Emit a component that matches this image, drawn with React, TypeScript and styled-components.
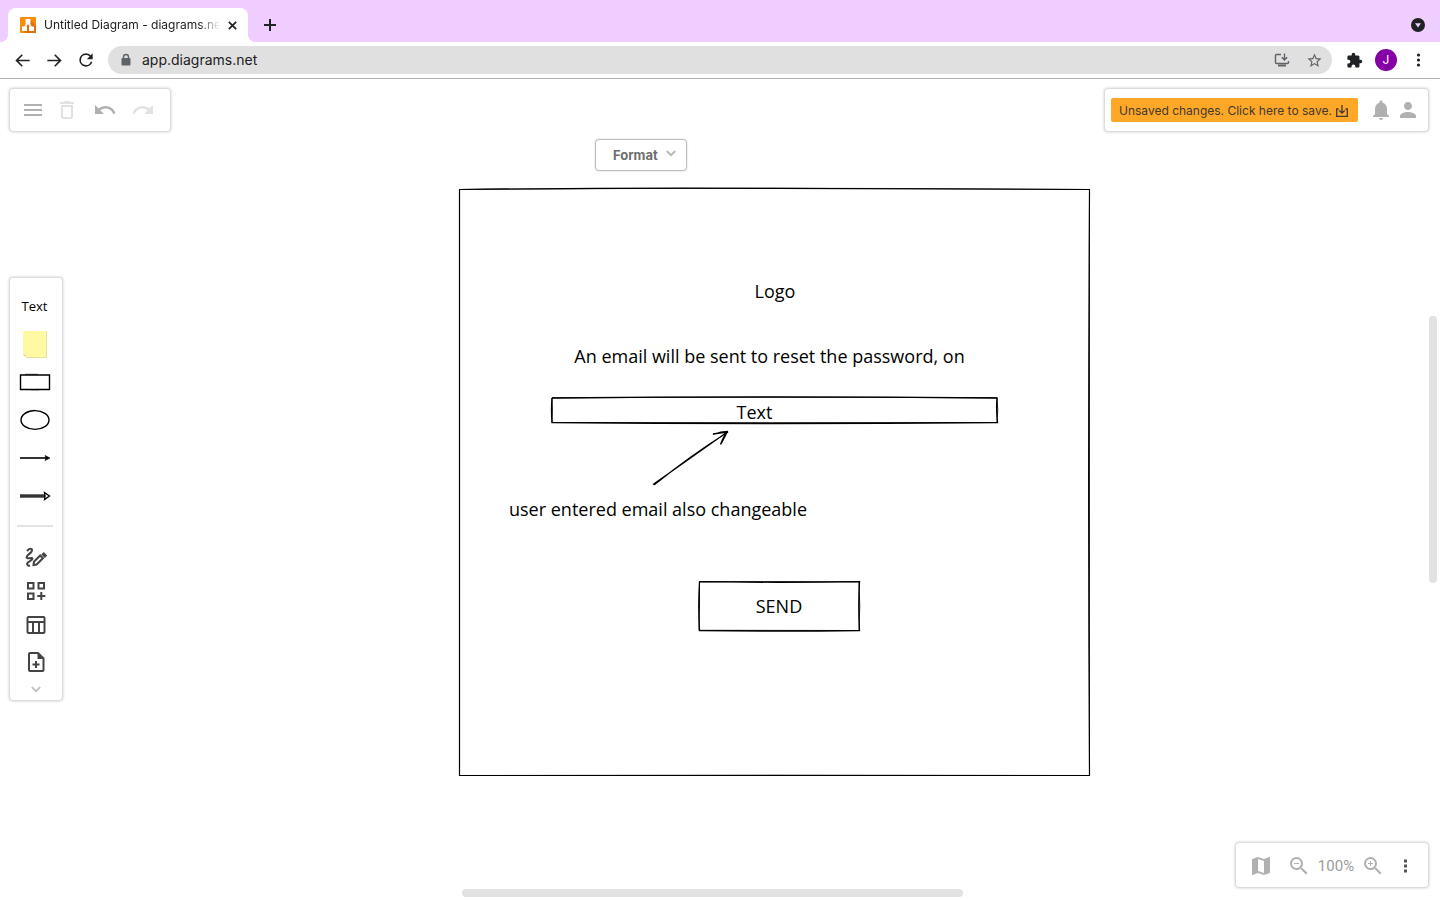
import React from "react";
import styled, { createGlobalStyle } from "styled-components";

const GlobalStyle = createGlobalStyle`
  *, *::before, *::after { box-sizing: border-box; }
  body { margin: 0; background: #fff; font-family: Inter, "Liberation Sans", sans-serif; color: #202124; }
  svg { display: block; flex: none; }
  button { font: inherit; color: inherit; }
`;

const Page = styled.div`
  display: flex;
  flex-direction: column;
  min-height: 100vh;
`;

/* Browser chrome */

const TabStrip = styled.header`
  display: flex;
  align-items: flex-end;
  height: 42px;
  padding: 0 15px 0 8px;
  background: #efceff;
`;

const Tab = styled.div`
  position: relative;
  display: flex;
  align-items: center;
  width: 240px;
  height: 34px;
  padding: 0 8px 0 12px;
  background: #fff;
  border-radius: 8px 8px 0 0;

  &::before,
  &::after {
    content: "";
    position: absolute;
    bottom: 0;
    width: 8px;
    height: 8px;
  }
  &::before {
    left: -8px;
    background: radial-gradient(circle at 0 0, #efceff 8px, #fff 8px);
  }
  &::after {
    right: -8px;
    background: radial-gradient(circle at 100% 0, #efceff 8px, #fff 8px);
  }
`;

const TabTitle = styled.span`
  flex: 1;
  min-width: 0;
  margin: 0 4px 0 8px;
  overflow: hidden;
  white-space: nowrap;
  font-size: 12px;
  line-height: 16px;
  mask-image: linear-gradient(to right, #000 88%, transparent);
`;

const IconButton = styled.button<{ $w?: number; $h?: number; $color?: string }>`
  display: flex;
  align-items: center;
  justify-content: center;
  flex: none;
  width: ${(p) => p.$w ?? 24}px;
  height: ${(p) => p.$h ?? 24}px;
  padding: 0;
  border: 0;
  background: none;
  color: ${(p) => p.$color ?? "#202124"};
`;

const NewTab = styled.div`
  display: flex;
  align-items: center;
  flex: 1;
  justify-content: space-between;
  height: 34px;
  padding-left: 10px;
`;

const NavBar = styled.nav`
  display: flex;
  align-items: center;
  height: 37px;
  padding: 0 14px 0 6px;
  border-bottom: 1px solid #b0b0b0;
`;

const NavButtons = styled.div`
  display: flex;
  width: 102px;
`;

const AddressBar = styled.div`
  display: flex;
  align-items: center;
  flex: 1;
  min-width: 0;
  height: 28px;
  padding: 0 10px 0 11px;
  gap: 11px;
  border-radius: 14px;
  background: #e0e0e0;
`;

const AddressInput = styled.input`
  flex: 1;
  min-width: 0;
  padding: 0;
  border: 0;
  outline: 0;
  background: none;
  color: #202124;
  font: 14px/20px Inter, "Liberation Sans", sans-serif;
`;

const AddressActions = styled.div`
  display: flex;
  gap: 16px;
`;

const NavEnd = styled.div`
  display: flex;
  align-items: center;
  padding-left: 14px;
  gap: 13px;
`;

const Avatar = styled.button`
  width: 22px;
  height: 22px;
  padding: 0;
  border: 0;
  border-radius: 50%;
  background: #8600a8;
  color: #fff;
  font-size: 12px;
  line-height: 22px;
`;

/* Editor */

const Workspace = styled.main`
  position: relative;
  flex: 1;
  min-height: 720px;
  overflow: hidden;
`;

const Panel = styled.div`
  position: absolute;
  display: flex;
  align-items: center;
  background: #fff;
  border: 1px solid #dcdcdc;
  border-radius: 4px;
  box-shadow: 0 0 3px rgba(0, 0, 0, 0.2);
`;

const MainToolbar = styled(Panel)`
  top: 9px;
  left: 9px;
  height: 44px;
  padding: 0 15px 0 11px;
  gap: 14px;
`;

const MenuGroup = styled.div`
  display: flex;
  gap: 10px;
`;

const StatusToolbar = styled(Panel)`
  top: 9px;
  right: 11px;
  height: 44px;
  padding: 0 8px 0 6px;
  gap: 3px;
`;

const SaveButton = styled.button`
  display: flex;
  align-items: center;
  justify-content: space-between;
  width: 247px;
  height: 24px;
  margin-right: 8px;
  padding: 1px 10px 0 8px;
  border: 0;
  border-radius: 2px;
  background: #ffa726;
  color: #403a30;
  font-size: 12px;
  line-height: 16px;
  white-space: nowrap;
`;

const FormatButton = styled.button`
  position: absolute;
  top: 60px;
  left: 595px;
  display: flex;
  align-items: center;
  width: 92px;
  height: 32px;
  padding: 0 10px 0 17px;
  justify-content: space-between;
  background: #fff;
  border: 1px solid #bdbdbd;
  border-radius: 4px;
  box-shadow: 0 0 2px rgba(0, 0, 0, 0.2);
  color: #6e6e6e;
  font-size: 13px;
  font-weight: 700;
  line-height: 16px;
`;

const FormatChevron = styled.span`
  padding-bottom: 4px;
  color: #b8b8b8;
`;

const ShapePanel = styled(Panel)`
  top: 198px;
  left: 9px;
  flex-direction: column;
  width: 54px;
  padding: 9px 0 4px;
`;

const ShapeGroup = styled.div`
  width: 52px;
  padding-right: 3px;
`;

const ShapeText = styled.span`
  font-family: "Open Sans", sans-serif;
  font-size: 13px;
  line-height: 16px;
  color: #000;
`;

const Divider = styled.hr`
  width: 36px;
  height: 2px;
  margin: 10px 2px 13px 0;
  border: 0;
  background: #e4e4e4;
`;

const ZoomToolbar = styled(Panel)`
  right: 11px;
  bottom: 12px;
  height: 46px;
  padding: 2px 11px 0 13px;
  gap: 8px;
`;

const MapSlot = styled.div`
  padding-right: 6px;
`;

const ZoomLevel = styled.button`
  display: flex;
  justify-content: center;
  width: 34px;
  padding: 0;
  border: 0;
  background: none;
  color: #9b9b9b;
  font-family: Roboto, sans-serif;
  font-size: 15px;
  line-height: 20px;
  white-space: nowrap;
`;

const Scrollbar = styled.div<{ $vertical?: boolean }>`
  position: absolute;
  border-radius: 4px;
  background: #e2e2e2;
  ${(p) =>
    p.$vertical
      ? "top: 237px; right: 3px; width: 8px; height: 267px;"
      : "left: 462px; bottom: 3px; width: 501px; height: 8px;"}
`;

/* Diagram nodes, each placed on the free canvas */

const Node = styled.div<{ $x: number; $y: number; $w: number; $h: number }>`
  position: absolute;
  left: ${(p) => p.$x}px;
  top: ${(p) => p.$y}px;
  width: ${(p) => p.$w}px;
  height: ${(p) => p.$h}px;
  display: flex;
  align-items: center;
  justify-content: center;
  color: #000;
  font-family: "Open Sans", sans-serif;
  font-size: 18px;
  line-height: 24px;
  white-space: nowrap;
`;

const Outline = styled.svg`
  position: absolute;
  inset: 0;
  overflow: visible;
`;

const Glyph = ({ d, size = 24 }: { d: string; size?: number }) => (
  <svg width={size} height={size} viewBox="0 0 24 24" fill="currentColor" aria-hidden="true">
    <path d={d} fillRule="evenodd" />
  </svg>
);

const icons = {
  back: "M21 11H6.83l5.59-5.59L11 4l-8 8 8 8 1.410-1.410L6.830 13H21v-2z",
  forward: "M13 4l-1.410 1.410L17.170 11H3v2h14.170l-5.580 5.590L13 20l8-8z",
  reload:
    "M17.65 6.35A7.96 7.96 0 0 0 12 4a8 8 0 1 0 7.73 10h-2.08A6 6 0 1 1 12 6c1.66 0 3.14.69 4.22 1.78L13 11h7V4l-2.35 2.35z",
  star: "M22 9.24l-7.19-.62L12 2 9.19 8.63 2 9.24l5.46 4.73L5.82 21 12 17.27 18.18 21l-1.63-7.03L22 9.24zM12 15.4l-3.76 2.27 1-4.28-3.32-2.88 4.38-.38L12 6.1l1.71 4.04 4.38.38-3.32 2.88 1 4.28L12 15.4z",
  puzzle:
    "M20.5 11H19V7c0-1.1-.9-2-2-2h-4V3.5a2.5 2.5 0 0 0-5 0V5H4c-1.1 0-2 .9-2 2v3.8h1.5a2.7 2.7 0 0 1 0 5.4H2V20c0 1.1.9 2 2 2h3.8v-1.5a2.7 2.7 0 0 1 5.4 0V22H17c1.1 0 2-.9 2-2v-4h1.5a2.5 2.5 0 0 0 0-5z",
  menu: "M3 18h18v-2H3v2zm0-5h18v-2H3v2zm0-7v2h18V6H3z",
  trash:
    "M6 19c0 1.1.9 2 2 2h8c1.1 0 2-.9 2-2V7H6v12zM8 9h8v10H8V9zm7.5-5l-1-1h-5l-1 1H5v2h14V4h-3.5z",
  undo: "M12.5 8c-2.65 0-5.05.99-6.9 2.6L2 7v9h9l-3.62-3.62c1.39-1.16 3.16-1.88 5.12-1.88 3.54 0 6.55 2.31 7.6 5.5l2.37-.78C21.08 11.03 17.15 8 12.5 8z",
  redo: "M18.4 10.6C16.55 8.99 14.15 8 11.5 8c-4.65 0-8.58 3.03-9.96 7.22L3.9 16c1.05-3.19 4.05-5.5 7.6-5.5 1.95 0 3.73.72 5.12 1.88L13 16h9V7l-3.6 3.6z",
  bell: "M12 22c1.1 0 2-.9 2-2h-4c0 1.1.89 2 2 2zm6-6v-5c0-3.07-1.64-5.64-4.5-6.32V4c0-.83-.67-1.5-1.5-1.5s-1.5.67-1.5 1.5v.68C7.63 5.36 6 7.92 6 11v5l-2 2v1h16v-1l-2-2z",
  person:
    "M12 12c2.21 0 4-1.79 4-4s-1.79-4-4-4-4 1.79-4 4 1.79 4 4 4zm0 2c-2.67 0-8 1.34-8 4v2h16v-2c0-2.66-5.33-4-8-4z",
  map: "M20.5 3l-.16.03L15 5.1 9 3 3.36 4.9c-.21.07-.36.25-.36.48V20.5c0 .28.22.5.5.5l.16-.03L9 18.9l6 2.1 5.64-1.9c.21-.07.36-.25.36-.48V3.5c0-.28-.22-.5-.5-.5zM15 19l-6-2.11V5l6 2.11V19z",
  zoomOut:
    "M15.5 14h-.79l-.28-.27A6.471 6.471 0 0 0 16 9.5 6.5 6.5 0 1 0 9.5 16c1.61 0 3.09-.59 4.23-1.57l.27.28v.79l5 4.99L20.49 19l-4.99-5zm-6 0C7.01 14 5 11.99 5 9.5S7.01 5 9.5 5 14 7.01 14 9.5 11.99 14 9.5 14zM7 9h5v1H7z",
  zoomIn:
    "M15.5 14h-.79l-.28-.27A6.471 6.471 0 0 0 16 9.5 6.5 6.5 0 1 0 9.5 16c1.61 0 3.09-.59 4.23-1.57l.27.28v.79l5 4.99L20.49 19l-4.99-5zm-6 0C7.01 14 5 11.99 5 9.5S7.01 5 9.5 5 14 7.01 14 9.5 11.99 14 9.5 14zM12 10h-2v2H9v-2H7V9h2V7h1v2h2z",
};

const Dots = ({ square }: { square?: boolean }) => (
  <svg width="16" height="16" viewBox="0 0 16 16" fill="currentColor" aria-hidden="true">
    {[3, 8, 13].map((y) =>
      square ? (
        <rect key={y} x="7" y={y - 1.5} width="3" height="3" />
      ) : (
        <circle key={y} cx="8.5" cy={y} r="1.6" />
      )
    )}
  </svg>
);

const Chevron = () => (
  <svg width="10" height="7" viewBox="0 0 10 7" fill="none" stroke="currentColor" strokeWidth="2" aria-hidden="true">
    <path d="M.8 1 5 5.2 9.2 1" />
  </svg>
);

const Favicon = () => (
  <svg width="16" height="16" viewBox="0 0 16 16" aria-hidden="true">
    <rect width="16" height="16" rx="1" fill="#f98c0a" />
    <path d="M10.500 3 16 8.500V16H6l-3.500-2.500z" fill="#e2700c" />
    <path d="M8 5 4.500 11M8 5l3.500 6" stroke="#fff" strokeWidth="1.800" />
    <g fill="#fff">
      <rect x="5.500" y="2" width="5" height="4.500" rx=".6" />
      <rect x="2" y="9.500" width="5" height="4.500" rx=".6" />
      <rect x="9" y="9.500" width="5" height="4.500" rx=".6" />
    </g>
  </svg>
);

const shapes: { name: string; art: React.ReactNode }[] = [
  { name: "Text", art: <ShapeText>Text</ShapeText> },
  {
    name: "Note",
    art: (
      <svg width="26" height="30" viewBox="0 0 26 30">
        <path d="M1 2h24v27H5l-4-3z" fill="#e3e0a0" />
        <path d="M1 2h23v26H4l-3-3z" fill="#fff9a1" />
        <path d="m1 25 3 3v-2z" fill="#d9d38a" />
      </svg>
    ),
  },
  {
    name: "Rectangle",
    art: (
      <svg width="32" height="18" viewBox="0 0 32 18" fill="none" stroke="#000" strokeWidth="1.4">
        <path d="M1.500 2H30.500V16.500H1.500z" />
        <path d="M6 1.300h13M12 16.800h8" strokeWidth=".7" />
      </svg>
    ),
  },
  {
    name: "Ellipse",
    art: (
      <svg width="30" height="22" viewBox="0 0 30 22" fill="none" stroke="#000" strokeWidth="1.4">
        <ellipse cx="15" cy="11" rx="14" ry="9.400" />
        <path d="M1.500 9C3 4 8 1.500 15 1.200" strokeWidth=".6" />
      </svg>
    ),
  },
  {
    name: "Arrow",
    art: (
      <svg width="32" height="8" viewBox="0 0 32 8" fill="none" stroke="#000">
        <path d="M1 4h28" strokeWidth="1.6" />
        <path d="m26 1.500 5 2.500-5 2.500 1-2.500z" fill="#000" strokeWidth=".6" />
      </svg>
    ),
  },
  {
    name: "Block arrow",
    art: (
      <svg width="32" height="10" viewBox="0 0 32 10" fill="none" stroke="#000">
        <path d="M1 5h25" stroke="#333" strokeWidth="3.400" />
        <path d="M25.500 1.500 30.500 5l-5 3.500 .5-3.500z" fill="#fff" strokeWidth="1.300" />
      </svg>
    ),
  },
];

const tools: { name: string; h: number; art: React.ReactNode }[] = [
  {
    name: "Freehand",
    h: 34,
    art: (
      <svg width="24" height="24" viewBox="0 0 24 24" fill="none" stroke="#444" strokeWidth="2">
        <path d="M3 6c2.500-3 5-3 5-.8C8 8 2.500 10 2.500 12.200c0 2.500 6-.4 6 1.600 0 1.700-5.500 3-5.500 5C3 20 4.500 21 6 20.500" />
        <path d="m9.500 20 .4-3.200 6.300-6.300 2.700 2.700-6.300 6.300z" />
        <path d="m18.500 8.200 3.500 3.500" strokeWidth="3.400" />
      </svg>
    ),
  },
  {
    name: "Shapes",
    h: 34,
    art: (
      <svg width="20" height="20" viewBox="0 0 20 20" fill="none" stroke="#444" strokeWidth="2">
        <path d="M2 2h5.500v5.500H2zM12.500 2H18v5.500h-5.500zM2 12.500h5.500V18H2zM15.300 11v8M11.300 15h8" />
      </svg>
    ),
  },
  {
    name: "Table",
    h: 34,
    art: (
      <svg width="20" height="20" viewBox="0 0 20 20" fill="none" stroke="#444" strokeWidth="2">
        <rect x="1.500" y="2" width="17" height="16" rx="1" />
        <path d="M1.500 7h17M7 7v11M13 7v11" />
      </svg>
    ),
  },
  {
    name: "Insert",
    h: 40,
    art: (
      <svg width="18" height="20" viewBox="0 0 18 20" fill="none" stroke="#444" strokeWidth="2">
        <path d="M3 1h8l5.500 5.500V18q0 1-1 1H3q-1 0-1-1V2q0-1 1-1zM9 9v7M5.500 12.500h7" />
        <path d="M10.500 1v6h6z" fill="#444" stroke="none" />
      </svg>
    ),
  },
];

export default function App() {
  return (
    <Page>
      <GlobalStyle />
      <TabStrip>
        <Tab>
          <Favicon />
          <TabTitle>Untitled Diagram - diagrams.net</TabTitle>
          <IconButton $w={16} $h={16} aria-label="Close tab">
            <svg width="9" height="9" viewBox="0 0 9 9" stroke="currentColor" strokeWidth="1.7">
              <path d="m.8.8 7.400 7.400M8.200.8.8 8.200" />
            </svg>
          </IconButton>
        </Tab>
        <NewTab>
          <IconButton aria-label="New tab">
            <svg width="12" height="12" viewBox="0 0 12 12" stroke="currentColor" strokeWidth="2">
              <path d="M6 0v12M0 6h12" />
            </svg>
          </IconButton>
          <IconButton $w={14} aria-label="Search tabs">
            <svg width="14" height="14" viewBox="0 0 14 14">
              <circle cx="7" cy="7" r="7" fill="#202124" />
              <path d="M4 5.200h6L7 9.400z" fill="#efceff" />
            </svg>
          </IconButton>
        </NewTab>
      </TabStrip>

      <NavBar>
        <NavButtons>
          <IconButton $w={32} aria-label="Back"><Glyph d={icons.back} size={19} /></IconButton>
          <IconButton $w={32} aria-label="Forward"><Glyph d={icons.forward} size={19} /></IconButton>
          <IconButton $w={32} aria-label="Reload"><Glyph d={icons.reload} size={20} /></IconButton>
        </NavButtons>
        <AddressBar>
          <svg width="12" height="14" viewBox="0 0 12 14" aria-hidden="true">
            <rect x="2.500" y="5" width="9" height="7.500" rx="1" fill="#5f6368" />
            <path d="M4.500 5.500V4a2.500 2.500 0 0 1 5 0v1.500" fill="none" stroke="#5f6368" strokeWidth="1.4" />
          </svg>
          <AddressInput aria-label="Address" defaultValue="app.diagrams.net" />
          <AddressActions>
            <IconButton $w={16} $h={16} $color="#5f6368" aria-label="Install app">
              <svg width="16" height="16" viewBox="0 0 16 16" fill="none" stroke="currentColor" strokeWidth="1.4">
                <path d="M7 2.500H2.500q-1 0-1 1v7q0 1 1 1h11q1 0 1-1V9M10.500 1.500v6M7.800 5.200l2.700 2.700 2.700-2.700" />
                <path d="M4 13.500h8" strokeWidth="2" />
              </svg>
            </IconButton>
            <IconButton $w={16} $h={16} $color="#5f6368" aria-label="Bookmark"><Glyph d={icons.star} size={17} /></IconButton>
          </AddressActions>
        </AddressBar>
        <NavEnd>
          <IconButton $w={16} $h={16} aria-label="Extensions"><Glyph d={icons.puzzle} size={17} /></IconButton>
          <Avatar aria-label="Profile">J</Avatar>
          <IconButton $w={16} $h={16} aria-label="Browser menu"><Dots /></IconButton>
        </NavEnd>
      </NavBar>

      <Workspace>
        <Node $x={459} $y={109} $w={631} $h={588}>
          <Outline width="631" height="588" fill="none" stroke="#000" strokeWidth="1.2" aria-hidden="true">
            <path d="M.5 1.500Q160-.4 315 .4T630.500 1.500Q628.800 290 630.500 587.500H.5Q1.200 300 .5 1.500" />
            <path d="M.5 1.500Q320-1 630.500 1.500V587.500Q315 586.800.5 587.500z" strokeWidth=".8" />
          </Outline>
        </Node>
        <Node $x={754} $y={200} $w={42} $h={24}>Logo</Node>
        <Node $x={572} $y={265} $w={395} $h={24}>An email will be sent to reset the password, on</Node>
        <Node $x={551} $y={318} $w={447} $h={26}>
          <Outline width="447" height="26" fill="none" stroke="#000" strokeWidth="1.3" aria-hidden="true">
            <path d="M1 1Q220-1.200 446 1 445 13 446.500 25.500 220 27.500 1 25.500 0 13 1 1" />
            <path d="M1 .8Q240-.2 446 .8 447.500 13 446 25.500 220 26 1 25.500 1.800 13 1 .8" strokeWidth=".9" />
          </Outline>
        </Node>
        <Node $x={736} $y={321} $w={37} $h={24}>Text</Node>
        <Node $x={652} $y={351} $w={78} $h={56}>
          <Outline width="78" height="56" fill="none" stroke="#000" strokeWidth="1.3" aria-hidden="true">
            <path d="M1 54.500 76 1.500M2 55Q38 26 76 2M61 4.500Q69 1.600 76 1.500M61 4 75 2M76 1.500Q71.500 6 68.500 14.500M75 2.500 69 14" />
          </Outline>
        </Node>
        <Node $x={513} $y={418} $w={290} $h={24}>user entered email also changeable</Node>
        <Node $x={698} $y={502} $w={162} $h={50}>
          <Outline width="162" height="50" fill="none" stroke="#000" strokeWidth="1.3" aria-hidden="true">
            <path d="M1 .7Q82 1.800 161.500.7 160 25 161.500 49.500 80 50.500 1.500 49.500 0 25 1.500.7" />
            <path d="M1.500.7H161Q162.500 25 161 49.500L1 49.300Q1.800 25 1.500.7" strokeWidth=".9" />
          </Outline>
          SEND
        </Node>

        <MainToolbar role="toolbar" aria-label="Main">
          <MenuGroup>
            <IconButton $color="#b0b0b0" aria-label="Menu"><Glyph d={icons.menu} /></IconButton>
            <IconButton $color="#e2e2e2" aria-label="Delete"><Glyph d={icons.trash} /></IconButton>
          </MenuGroup>
          <IconButton $color="#b0b0b0" aria-label="Undo"><Glyph d={icons.undo} /></IconButton>
          <IconButton $color="#e2e2e2" aria-label="Redo"><Glyph d={icons.redo} /></IconButton>
        </MainToolbar>

        <StatusToolbar role="toolbar" aria-label="Status">
          <SaveButton>
            Unsaved changes. Click here to save.
            <svg width="12" height="12" viewBox="0 0 12 12" fill="none" stroke="currentColor" strokeWidth="1.3" aria-hidden="true">
              <path d="M2.500 4H.7v7.300h10.600V4H9.500M6 0v8M3.300 5.500 6 8.200l2.700-2.700" />
            </svg>
          </SaveButton>
          <IconButton $color="#b0b0b0" aria-label="Notifications"><Glyph d={icons.bell} /></IconButton>
          <IconButton $color="#b0b0b0" aria-label="Account"><Glyph d={icons.person} /></IconButton>
        </StatusToolbar>

        <FormatButton>
          Format
          <FormatChevron><Chevron /></FormatChevron>
        </FormatButton>

        <ShapePanel role="toolbar" aria-label="Shapes">
          <ShapeGroup>
            {shapes.map((s) => (
              <IconButton key={s.name} $w={49} $h={38} aria-label={s.name}>{s.art}</IconButton>
            ))}
          </ShapeGroup>
          <Divider />
          {tools.map((t) => (
            <IconButton key={t.name} $w={50} $h={t.h} aria-label={t.name}>{t.art}</IconButton>
          ))}
          <IconButton $w={50} $h={14} $color="#c4c4c4" aria-label="More shapes"><Chevron /></IconButton>
        </ShapePanel>

        <Scrollbar $vertical />
        <Scrollbar />

        <ZoomToolbar role="toolbar" aria-label="Zoom">
          <MapSlot>
            <IconButton $color="#b0b0b0" aria-label="Outline"><Glyph d={icons.map} /></IconButton>
          </MapSlot>
          <IconButton $color="#b0b0b0" aria-label="Zoom out"><Glyph d={icons.zoomOut} /></IconButton>
          <ZoomLevel>100%</ZoomLevel>
          <IconButton $color="#b0b0b0" aria-label="Zoom in"><Glyph d={icons.zoomIn} /></IconButton>
          <IconButton $color="#555" aria-label="More"><Dots square /></IconButton>
        </ZoomToolbar>
      </Workspace>
    </Page>
  );
}
